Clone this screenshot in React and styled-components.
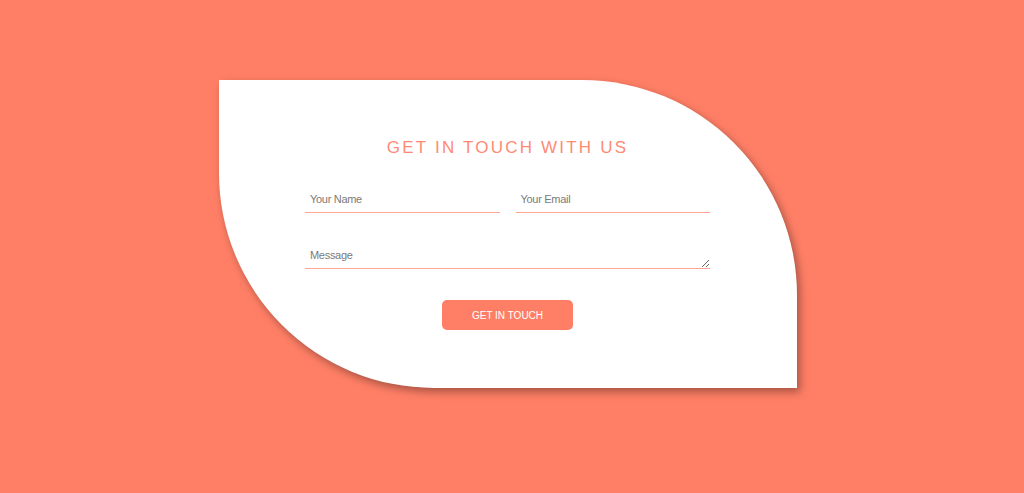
import React from 'react';
import styled, { createGlobalStyle } from 'styled-components';

const coral = '#ff7f66';

const GlobalStyle = createGlobalStyle`
  html, body {
    margin: 0;
    padding: 0;
    background: ${coral};
    font-family: "Liberation Sans", Arial, sans-serif;
  }
  * { box-sizing: border-box; }
`;

const Page = styled.div`
  width: 1024px;
  height: 493px;
  padding: 80px 0 0 219px;
`;

const Card = styled.form`
  width: 578px;
  height: 308px;
  background: #fff;
  border-radius: 0 215px 0 215px;
  box-shadow: 3px 4px 8px rgba(0, 0, 0, 0.35);
  padding: 58px 87px 0 86px;
  display: flex;
  flex-direction: column;
  align-items: center;
`;

const Title = styled.h2`
  margin: 0 0 26px;
  font-size: 17px;
  line-height: 20px;
  font-weight: 400;
  letter-spacing: 2.2px;
  color: #ff8a75;
  text-align: center;
`;

const Row = styled.div`
  width: 100%;
  display: flex;
  gap: 16px;
  margin-bottom: 27px;
`;

const fieldStyles = `
  width: 100%;
  border: none;
  border-bottom: 1px solid #ffa590;
  outline: none;
  padding: 8px 5px 6px;
  font-family: "Liberation Sans", Arial, sans-serif;
  font-size: 11px;
  line-height: 14px;
  letter-spacing: -0.3px;
  color: #555;
  background: transparent;
  &::placeholder { color: #7a7a7a; }
`;

const Input = styled.input`
  ${fieldStyles}
  flex: 1;
  height: 29px;
`;

const TextArea = styled.textarea`
  ${fieldStyles}
  display: block;
  height: 29px;
  margin-bottom: 31px;
`;

const Button = styled.button`
  width: 131px;
  height: 30px;
  border: none;
  border-radius: 5px;
  background: ${coral};
  color: #fff;
  font-family: "Liberation Sans", Arial, sans-serif;
  font-size: 10px;
  cursor: pointer;
`;

export default function App() {
  return (
    <>
      <GlobalStyle />
      <Page>
        <Card onSubmit={e => e.preventDefault()}>
          <Title>GET IN TOUCH WITH US</Title>
          <Row>
            <Input type="text" placeholder="Your Name" />
            <Input type="email" placeholder="Your Email" />
          </Row>
          <TextArea rows={1} placeholder="Message" />
          <Button type="submit">GET IN TOUCH</Button>
        </Card>
      </Page>
    </>
  );
}
